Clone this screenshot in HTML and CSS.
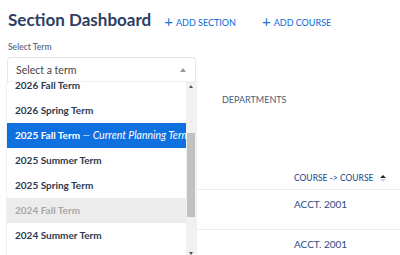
FILE: index.html
```html
<!DOCTYPE html>
<html lang="en">
<head>
    <meta charset="UTF-8">
    <title>Section Dashboard</title>
    <link rel="stylesheet" href="styles.css">
</head>
<body>
<div class="page">
    <div class="header">
        <h1 class="title">Section Dashboard</h1>
        <a class="add-btn"><span class="plus">+</span>ADD SECTION</a>
        <a class="add-btn"><span class="plus">+</span>ADD COURSE</a>
    </div>

    <div class="term-field">
        <label class="field-label">Select Term</label>
        <div class="select">
            <span class="select-value">Select a term</span>
            <span class="caret-up"></span>
        </div>

        <div class="dropdown">
            <ul class="options">
                <li>2026 Fall Term</li>
                <li>2026 Spring Term</li>
                <li class="active">2025 Fall Term <em>&mdash; Current Planning Term</em></li>
                <li>2025 Summer Term</li>
                <li>2025 Spring Term</li>
                <li class="disabled">2024 Fall Term</li>
                <li>2024 Summer Term</li>
                <li>2024 Spring Term</li>
            </ul>
            <div class="scrollbar">
                <span class="arrow-up"></span>
                <span class="thumb"></span>
                <span class="arrow-down"></span>
            </div>
        </div>
    </div>

    <div class="tabs">
        <span class="tab">DEPARTMENTS</span>
    </div>

    <table class="grid">
        <thead>
        <tr>
            <th class="spacer"></th>
            <th>COURSE -&gt; COURSE <span class="sort"><i class="up"></i><i class="down"></i></span></th>
        </tr>
        </thead>
        <tbody>
        <tr>
            <td class="spacer"></td>
            <td>ACCT. 2001</td>
        </tr>
        <tr>
            <td class="spacer"></td>
            <td>ACCT. 2001</td>
        </tr>
        </tbody>
    </table>
</div>
</body>
</html>
```

FILE: styles.css
```css
html, body, ul, li, h1 {
    margin: 0;
    padding: 0;
    list-style: none;
}

html, body {
    height: 255px;
    overflow: hidden;
}

body {
    font-family: Lato, "Open Sans", sans-serif;
    background: #fff;
    color: #2c3a52;
}

.page {
    padding: 0 0 0 8px;
}

/* header */
.header {
    display: flex;
    align-items: baseline;
    height: 36px;
}

.title {
    font-size: 17px;
    font-weight: 700;
    color: #2d4063;
    line-height: 39px;
    margin-right: 13px;
}

.add-btn {
    display: flex;
    align-items: baseline;
    font-size: 9px;
    font-weight: 500;
    color: #1a73d9;
    margin-right: 26px;
    cursor: pointer;
}

.add-btn .plus {
    font-size: 15px;
    font-weight: 400;
    margin-right: 3px;
    line-height: 10px;
    position: relative;
    top: 1px;
}

/* term select */
.term-field {
    position: relative;
    width: 189px;
    margin-left: -1px;
}

.field-label {
    display: block;
    font-size: 8.5px;
    font-weight: 600;
    color: #5b6b88;
    padding: 6px 0 5px 1px;
    line-height: 10px;
}

.select {
    display: flex;
    align-items: center;
    justify-content: space-between;
    height: 24px;
    border: 1px solid #e3e6ea;
    border-bottom: 0;
    border-radius: 4px 4px 0 0;
    padding: 0 9px 0 8px;
}

.select-value {
    font-size: 10.5px;
    color: #444;
}

.caret-up {
    width: 0;
    height: 0;
    border-left: 3px solid transparent;
    border-right: 3px solid transparent;
    border-bottom: 4px solid #9a9a9a;
}

.dropdown {
    position: absolute;
    left: 0;
    top: 100%;
    width: 189px;
    height: 176px;
    display: flex;
    background: #fff;
    box-shadow: 0 0 0 1px #eef0f2;
    overflow: hidden;
    z-index: 5;
}

.options {
    flex: 1;
    margin-top: -9px;
    overflow: hidden;
}

.options li {
    height: 25px;
    line-height: 25px;
    padding-left: 8px;
    font-size: 10px;
    font-weight: 700;
    color: #2c3a52;
    white-space: nowrap;
}

.options li.active {
    background: #0f70e0;
    color: #fff;
}

.options li.active em {
    font-size: 10.5px;
    font-weight: 400;
    font-style: italic;
}

.options li.disabled {
    background: #ececec;
    color: #a8a8a8;
}

.scrollbar {
    position: relative;
    width: 10px;
    background: #f1f1f1;
}

.scrollbar .thumb {
    position: absolute;
    left: 1px;
    right: 1px;
    top: 51px;
    height: 84px;
    background: #c1c1c1;
}

.arrow-up, .arrow-down {
    position: absolute;
    left: 3px;
    width: 0;
    height: 0;
    border-left: 2px solid transparent;
    border-right: 2px solid transparent;
}

.arrow-up {
    top: 3px;
    border-bottom: 3px solid #555;
}

.arrow-down {
    top: 170px;
    border-top: 3px solid #555;
}

/* tabs */
.tabs {
    display: flex;
    padding: 12px 0 0 214px;
    height: 78px;
}

.tab {
    font-size: 9px;
    color: #4a5a7a;
    line-height: 12px;
}

/* table */
.grid {
    width: 392px;
    border-collapse: collapse;
}

.grid .spacer {
    width: 286px;
    padding: 0;
}

.grid th {
    text-align: left;
    font-size: 8.5px;
    font-weight: 500;
    color: #2f5496;
    line-height: 12px;
    padding: 0 0 5px;
    border-bottom: 1px solid #eceef1;
    white-space: nowrap;
}

.grid td {
    font-size: 10px;
    color: #2e4a7d;
    line-height: 13px;
    padding: 8px 0 18px;
    border-bottom: 1px solid #eceef1;
}

.sort {
    display: inline-flex;
    flex-direction: column;
    gap: 1px;
    margin-left: 4px;
    vertical-align: middle;
}

.sort i {
    width: 0;
    height: 0;
    border-left: 3px solid transparent;
    border-right: 3px solid transparent;
}

.sort .up {
    border-bottom: 3px solid #222;
}

.sort .down {
    border-top: 3px solid #c9d3e6;
}
```
